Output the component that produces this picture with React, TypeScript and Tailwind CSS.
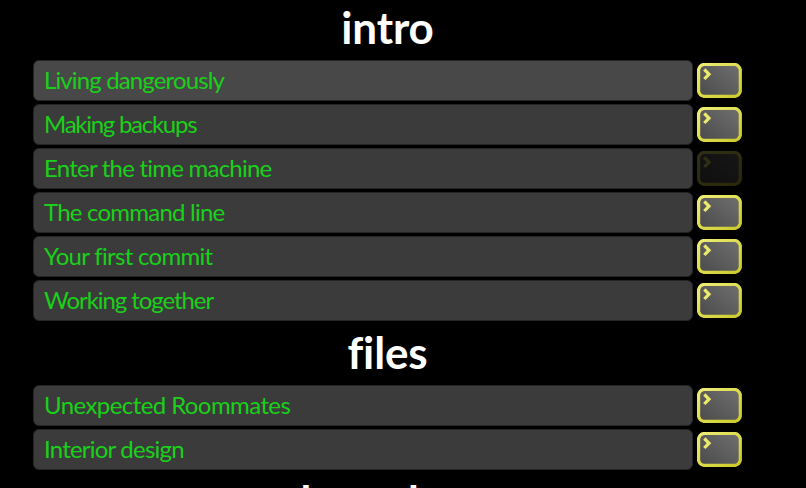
type Level = { name: string; spacing: string; active?: boolean; locked?: boolean };
type Chapter = { title: string; spacing: string; levels: Level[] };

const chapters: Chapter[] = [
  {
    title: 'intro',
    spacing: 'tracking-[-0.1px]',
    levels: [
      { name: 'Living dangerously', spacing: 'tracking-[-0.87px]', active: true },
      { name: 'Making backups', spacing: 'tracking-[-1.27px]' },
      { name: 'Enter the time machine', spacing: 'tracking-[-0.77px]', locked: true },
      { name: 'The command line', spacing: 'tracking-[-0.78px]' },
      { name: 'Your first commit', spacing: 'tracking-[-0.7px]' },
      { name: 'Working together', spacing: 'tracking-[-1.07px]' },
    ],
  },
  {
    title: 'files',
    spacing: 'tracking-[-0.1px]',
    levels: [
      { name: 'Unexpected Roommates', spacing: 'tracking-[-0.58px]' },
      { name: 'Interior design', spacing: 'tracking-[-0.79px]' },
    ],
  },
  { title: 'branches', spacing: 'tracking-[-0.4px]', levels: [] },
];

function TerminalIcon({ locked }: { locked?: boolean }) {
  return (
    <svg width="45" height="35" viewBox="0 0 45 35" className={`mt-[3px] shrink-0 ${locked ? 'opacity-20' : ''}`}>
      <defs>
        <linearGradient id="screen" x1="0" y1="1" x2="1" y2="0">
          <stop offset="0" stopColor="#4a4a4a" />
          <stop offset="1" stopColor="#707070" />
        </linearGradient>
        <linearGradient id="frame" x1="0" y1="0" x2="1" y2="1">
          <stop offset="0" stopColor="#efed76" />
          <stop offset="1" stopColor="#cccb28" />
        </linearGradient>
      </defs>
      <path
        d="M6.5 1.5H38.5Q42 2.5 43.3 6.5V28.5Q42 32.5 38.5 33.3H6.5Q2.5 32.5 1.6 28.5V6.5Q2.5 2.5 6.5 1.5Z"
        fill="url(#screen)"
        stroke="url(#frame)"
        strokeWidth="3.2"
      />
      <path d="M7.3 6.5L12 11.2L7.3 16" fill="none" stroke="#ece96b" strokeWidth="3.2" />
    </svg>
  );
}

export default function App() {
  return (
    <main className="h-[488px] w-[806px] overflow-hidden bg-black pl-[33px] font-['Lato',sans-serif]">
      {chapters.map((chapter) => (
        <section key={chapter.title} className="w-[709px]">
          <h1 className={`flex h-[61px] items-center justify-center pb-[7px] text-[44px] leading-none font-bold text-white [font-variant-ligatures:none] ${chapter.spacing}`}>
            {chapter.title}
          </h1>
          <div className="flex flex-col gap-1 pb-1">
            {chapter.levels.map((level) => (
              <div key={level.name} className="-mt-px mb-px flex h-10 gap-1">
                <div
                  className={`flex h-[41px] w-[660px] items-center rounded-md border border-[#252525] pb-[2px] pl-[10px] text-[24px] leading-none whitespace-nowrap text-[#1ad01a] ${level.spacing} ${level.active ? 'bg-[#484848]' : 'bg-[#3b3b3b]'}`}
                >
                  {level.name}
                </div>
                <TerminalIcon locked={level.locked} />
              </div>
            ))}
          </div>
        </section>
      ))}
    </main>
  );
}
